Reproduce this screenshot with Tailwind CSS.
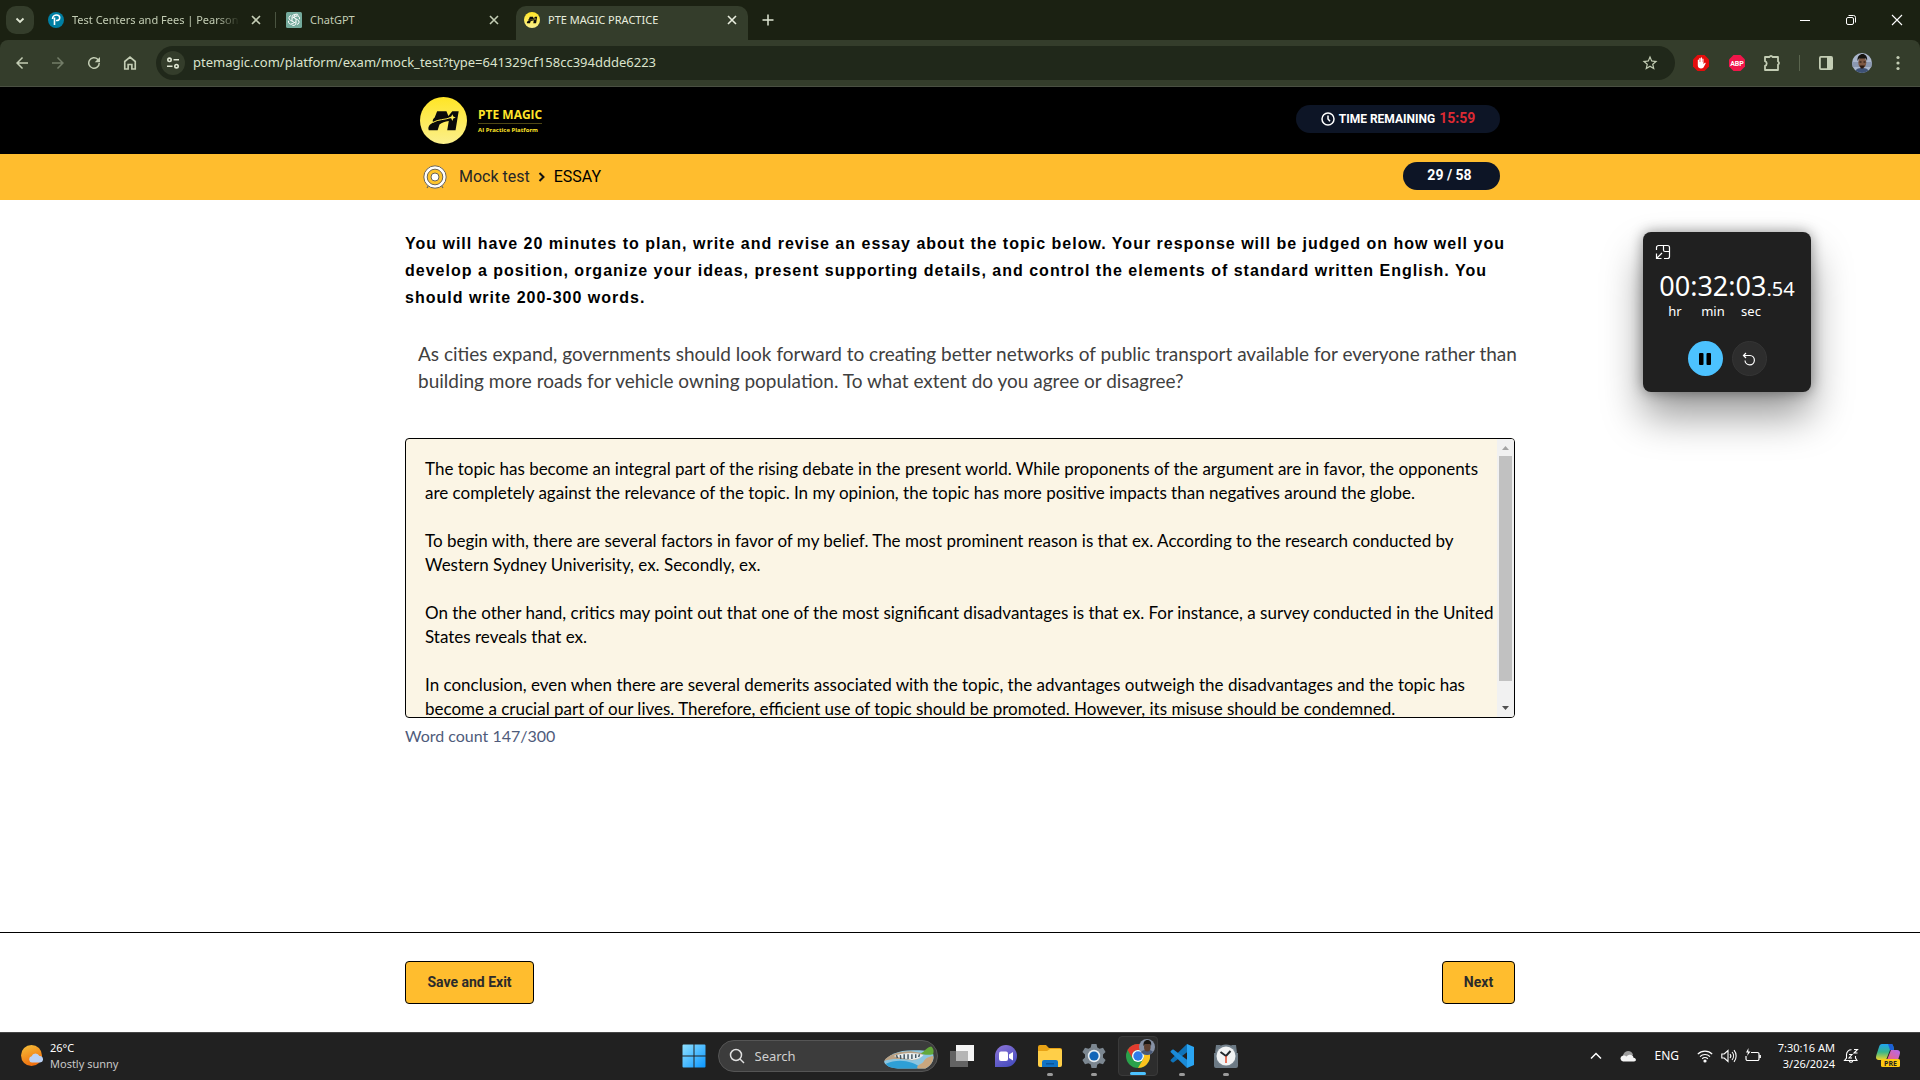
<!DOCTYPE html>
<html lang="en">
<head>
<meta charset="utf-8">
<meta name="viewport" content="width=device-width, initial-scale=1">
<title>PTE MAGIC PRACTICE</title>
<script src="https://cdn.jsdelivr.net/npm/@tailwindcss/browser@4"></script>
</head>
<body class="flex min-h-screen flex-col bg-white font-['Noto_Sans',sans-serif]">

<!-- Shared symbols -->
<svg width="0" height="0" class="absolute" aria-hidden="true">
  <symbol id="close" viewBox="0 0 16 16"><path d="M4 4l8 8M12 4l-8 8" fill="none" stroke="currentColor" stroke-width="1.6"/></symbol>
  <symbol id="magic" viewBox="0 0 48 48">
    <defs><linearGradient id="mg" x1="0" y1="0" x2="0" y2="1"><stop offset="0" stop-color="#ffe525"/><stop offset="1" stop-color="#fbf08d"/></linearGradient></defs>
    <circle cx="24" cy="24" r="24" fill="url(#mg)"/>
    <path d="M17.500 14.500h9.500l2 5 4-5h6.500L36.300 34h-8.500l1.600-9.500c-4 .6-7 1.600-9.500 3.500L18 34H9c-1.500-3.500 1-6.500 5.500-8.500h-1.300c-.8-2 .8-3.500 1.800-4.500z" fill="#0a0a0a"/>
    <path d="M13 26c6-3.500 12-2.500 18.500-5" stroke="#fdeb50" stroke-width="1" fill="none"/>
    <path d="M33 17.500l1 2.500 2.500 1-2.500 1-1 2.500-1-2.500-2.500-1 2.500-1z" fill="#fdeb50"/>
  </symbol>
</svg>

<!-- Browser tab strip -->
<nav aria-label="Tabs" class="flex h-10 shrink-0 items-center bg-[#1b2112] text-[11px] text-[#c3cdb4]">
  <button aria-label="Search tabs" class="ml-1.5 flex size-7 items-center justify-center rounded-[10px] bg-[#343d2b]">
    <svg class="size-4" viewBox="0 0 16 16" fill="none" stroke="#dfe6d3" stroke-width="1.8"><path d="M4.500 6.500L8 10l3.500-3.500"/></svg>
  </button>
  <div class="flex h-full w-[241px] items-center pl-3.5">
    <svg class="size-4 shrink-0" viewBox="0 0 16 16"><circle cx="8" cy="8" r="8" fill="#007fa3"/><path d="M6.500 13V5.500M4.500 7c0-3 2.500-4 4-4 2 0 3.200 1.200 3.200 2.800C11.700 7.800 10 8.800 8 8.500" fill="none" stroke="#fff" stroke-width="1.6"/></svg>
    <a href="#" class="ml-2 w-[168px] whitespace-nowrap [mask-image:linear-gradient(to_right,black_86%,transparent)]">Test Centers and Fees | Pearson</a>
    <button aria-label="Close tab" class="ml-2"><svg class="size-4"><use href="#close"/></svg></button>
  </div>
  <span class="h-4 w-px bg-[#4a5440]"></span>
  <div class="flex h-full w-[240px] items-center pr-3.5 pl-2.5">
    <svg class="size-4 shrink-0" viewBox="0 0 16 16"><rect width="16" height="16" rx="1.500" fill="#74aa9c"/><path fill="none" stroke="#fff" d="M8 6V4.500a2.400 2.400 0 014.400-1.300M6 9.200V5a2.400 2.400 0 014.500-1.200M6.300 6.200l3.600-2a2.400 2.400 0 013.400 3.100M8 5.800l3.800 2.100a2.400 2.400 0 01-.9 4.500M10 6.900V11a2.400 2.400 0 01-4.500 1.200M9.800 9.800l-3.700 2a2.400 2.400 0 01-3.400-3.100M8 10.200L4.200 8.100a2.400 2.400 0 01.9-4.500"/></svg>
    <a href="#" class="ml-2 flex-1">ChatGPT</a>
    <button aria-label="Close tab"><svg class="size-4"><use href="#close"/></svg></button>
  </div>
  <div class="flex h-[34px] w-[232px] items-center self-end rounded-t-[10px] bg-[#343d2b] pr-2 pb-1.5 pl-2 text-[#e9eedf]">
    <svg class="size-4 shrink-0"><use href="#magic"/></svg>
    <a href="#" aria-current="page" class="ml-2 flex-1">PTE MAGIC PRACTICE</a>
    <button aria-label="Close tab"><svg class="size-4"><use href="#close"/></svg></button>
  </div>
  <button aria-label="New tab" class="ml-3"><svg class="size-4" viewBox="0 0 16 16" stroke="#dfe6d3" stroke-width="1.5"><path d="M8 2.500v11M2.500 8h11"/></svg></button>
  <div class="ml-auto flex text-white">
    <button aria-label="Minimize" class="flex w-[46px] justify-center"><svg class="size-3" viewBox="0 0 12 12" stroke="currentColor"><path d="M1 6.500h10"/></svg></button>
    <button aria-label="Restore" class="flex w-[46px] justify-center"><svg class="size-3" viewBox="0 0 12 12" fill="none" stroke="currentColor"><rect x="1.500" y="3.500" width="7" height="7" rx="1.500"/><path d="M3.500 1.500H8.500a2 2 0 012 2V8.500"/></svg></button>
    <button aria-label="Close" class="flex w-[46px] justify-center"><svg class="size-3" viewBox="0 0 12 12" stroke="currentColor" stroke-width="1.100"><path d="M1 1l10 10M11 1L1 11"/></svg></button>
  </div>
</nav>

<!-- Browser toolbar -->
<div class="shrink-0 bg-[#1b2112]">
<div class="flex h-[47px] items-center rounded-t-lg border-b border-[#4a5042] bg-[#343d2b] text-[#c3cdb4]">
  <div class="flex w-[156px] items-center gap-[18px] pl-[13px]">
    <button aria-label="Back"><svg class="size-[18px]" viewBox="0 0 24 24" fill="currentColor"><path d="M20 11H7.830l5.590-5.590L12 4l-8 8 8 8 1.410-1.410L7.830 13H20z"/></svg></button>
    <button aria-label="Forward" class="text-[#737d68]"><svg class="size-[18px]" viewBox="0 0 24 24" fill="currentColor"><path d="M4 11h12.170l-5.590-5.590L12 4l8 8-8 8-1.410-1.410L16.170 13H4z"/></svg></button>
    <button aria-label="Reload"><svg class="size-[18px]" viewBox="0 0 24 24" fill="currentColor"><path d="M17.650 6.350A8 8 0 1020 12h-2a6 6 0 11-1.780-4.220L13 11h7V4z"/></svg></button>
    <button aria-label="Home"><svg class="size-[18px]" viewBox="0 0 24 24" fill="none" stroke="currentColor" stroke-width="2.200"><path d="M5 10v10h4.500v-6h5v6H19V10l-7-6z"/></svg></button>
  </div>
  <div class="flex h-[34px] flex-1 items-center rounded-full bg-[#20281a] pr-4 pl-[5px]">
    <span class="flex size-6 items-center justify-center rounded-full bg-[#343d2b]">
      <svg class="size-4" viewBox="0 0 16 16" fill="none" stroke="#dfe6d3" stroke-width="1.600"><circle cx="4.500" cy="4.800" r="1.700"/><path d="M8.500 4.800H14M2 11.200h5.500"/><circle cx="11.500" cy="11.200" r="1.700"/></svg>
    </span>
    <input aria-label="Address" type="text" value="ptemagic.com/platform/exam/mock_test?type=641329cf158cc394ddde6223" class="ml-2 flex-1 bg-transparent text-[13px] text-[#dbe3cc] outline-none">
    <button aria-label="Bookmark"><svg class="size-[18px]" viewBox="0 0 24 24" fill="currentColor"><path d="M22 9.240l-7.190-.62L12 2 9.190 8.630 2 9.240l5.460 4.730L5.820 21 12 17.270 18.180 21l-1.630-7.030zM12 15.400l-3.760 2.270 1-4.280-3.320-2.880 4.380-.38L12 6.100l1.710 4.040 4.380.38-3.320 2.880 1 4.280z"/></svg></button>
  </div>
  <div class="flex items-center pr-3.5 pl-[17px]">
    <button aria-label="AdBlock"><svg class="size-[18px]" viewBox="0 0 18 18"><path d="M5.500 1h7L17 5.500v7L12.500 17h-7L1 12.500v-7z" fill="#e40d0d"/><path d="M5.800 9.500V6c0-.8 1.200-.8 1.200 0v2h.3V4.500c0-.8 1.200-.8 1.200 0V8h.3V4c0-.9 1.200-.9 1.200 0v4h.3V5c0-.8 1.200-.8 1.200 0v5.200l1-1.300c.7-.6 1.500 0 1 .8L11.500 13.500c-1.500 1.800-5.700 1.400-5.700-2z" fill="#fff"/></svg></button>
    <button aria-label="Adblock Plus" class="ml-[18px]"><svg class="size-[18px]" viewBox="0 0 18 18"><path d="M5.500 1h7L17 5.500v7L12.500 17h-7L1 12.500v-7z" fill="#f0164a"/><text x="9" y="11.500" text-anchor="middle" fill="#fff" font-family="Roboto, sans-serif" font-size="7" font-weight="700">ABP</text></svg></button>
    <button aria-label="Extensions" class="ml-4"><svg class="size-5" viewBox="0 0 20 20" fill="none" stroke="currentColor" stroke-width="1.800" stroke-linejoin="round"><path d="M3 4h4.500a1.600 1.600 0 013 0H16v4.500a1.600 1.600 0 010 3V17H3v-4.200a2.400 2.400 0 000-4.600z"/></svg></button>
    <span class="ml-[17px] h-4 w-px bg-[#5a654e]"></span>
    <button aria-label="Side panel" class="ml-[18px]"><svg class="size-4" viewBox="0 0 16 16"><rect x="1.900" y="1.900" width="12.200" height="12.200" rx="1" fill="none" stroke="currentColor" stroke-width="1.800"/><path d="M9 2h5v12H9z" fill="currentColor"/></svg></button>
    <button aria-label="Profile" class="ml-[18px]"><svg class="size-5" viewBox="0 0 20 20"><clipPath id="av"><circle cx="10" cy="10" r="10"/></clipPath><g clip-path="url(#av)"><path fill="#aab6cc" d="M0 0h20v20H0z"/><path fill="#8b98b0" d="M0 9h20v5H0z"/><path d="M3 20c0-4 3-5 7-5s7 1 7 5z" fill="#3e5275"/><ellipse cx="10.300" cy="9.500" rx="4" ry="5.500" fill="#7d5843"/><path d="M5.500 8C5 3 8 1 10.500 1S16 3.500 15 8l-1-2.500H7z" fill="#15120f"/><path d="M7.500 12.500h5.500L11 15.500H9z" fill="#2a1a12"/><path d="M7.500 9h2M11.500 9h2" stroke="#1c120c"/></g></svg></button>
    <button aria-label="Menu" class="ml-[18px]"><svg class="size-4" viewBox="0 0 16 16" fill="currentColor"><circle cx="8" cy="2.500" r="1.600"/><circle cx="8" cy="8" r="1.600"/><circle cx="8" cy="13.500" r="1.600"/></svg></button>
  </div>
</div>
</div>

<!-- Site header -->
<header class="shrink-0 bg-black">
  <div class="mx-auto flex h-[67px] max-w-[1080px] items-center justify-between">
    <a href="#" class="flex items-center gap-[11px]">
      <svg class="size-[47px]" aria-label="PTE Magic"><use href="#magic"/></svg>
      <span class="flex flex-col font-['Open_Sans',sans-serif] font-bold text-[#ffe52a]">
        <span class="border-b border-[#4e4715] pt-0.5 text-[12px] leading-4">PTE MAGIC</span>
        <span class="text-[6px] leading-3">AI Practice Platform</span>
      </span>
    </a>
    <div class="mb-1 flex h-7 w-[204px] items-center justify-center gap-1 rounded-full bg-[#0d1526] font-['Roboto',sans-serif] text-[12px] font-bold text-white">
      <svg class="size-3.5" viewBox="0 0 14 14" fill="none" stroke="currentColor" stroke-width="1.500"><circle cx="7" cy="7" r="6"/><path d="M7 3.500V7l2 2.300"/></svg>
      <span>TIME REMAINING</span><time class="text-[14px] text-[#dc2a33]">15:59</time>
    </div>
  </div>
</header>
<div class="shrink-0 bg-[#ffbd2e]">
  <div class="mx-auto flex h-[46px] max-w-[1080px] items-center justify-between">
    <nav aria-label="Breadcrumb" class="flex items-center pl-[3px] font-['Roboto',sans-serif] text-base text-[#262626]">
      <svg class="size-6" viewBox="0 0 24 24"><path d="M6 20l-2 3M18 20l2 3" stroke="#6b6455" stroke-width="1.200"/><circle cx="12" cy="12" r="11.200" fill="#fff" stroke="#6b6455" stroke-width="1"/><circle cx="12" cy="12" r="7.800" fill="#ffc52c" stroke="#6b6455" stroke-width="1"/><circle cx="12" cy="12" r="4" fill="#fff" stroke="#6b6455" stroke-width="1"/></svg>
      <a href="#" class="ml-3">Mock test</a>
      <svg class="mx-[7px] size-2.5" viewBox="0 0 10 10" fill="none" stroke="#111" stroke-width="2"><path d="M2.500 1l4 4-4 4"/></svg>
      <span class="text-black">ESSAY</span>
    </nav>
    <div class="mb-0.5 flex h-7 w-[97px] items-center justify-center rounded-full bg-[#0d1526] pr-1 pb-0.5 font-['Roboto',sans-serif] text-[14px] font-bold text-white">29 / 58</div>
  </div>
</div>

<!-- Essay task -->
<main class="mx-auto w-full max-w-[1140px] flex-1 px-[15px] pt-[30px] font-['Lato',sans-serif]">
  <h1 class="font-['Liberation_Sans',Arial,sans-serif] text-base leading-[27px] font-bold tracking-[1px] text-black">You will have 20 minutes to plan, write and revise an essay about the topic below. Your response will be judged on how well you develop a position, organize your ideas, present supporting details, and control the elements of standard written English. You should write 200-300 words.</h1>
  <p class="mt-[29px] -mr-1 pl-[13px] text-[19px] leading-[27px] text-[#404040]">As cities expand, governments should look forward to creating better networks of public transport available for everyone rather than<br>building more roads for vehicle owning population. To what extent do you agree or disagree?</p>
  <div class="mt-11 flex h-[280px] overflow-hidden rounded border border-black bg-[#fbf5e5]">
    <textarea aria-label="Your response" class="h-full flex-1 resize-none overflow-hidden pt-[18px] pl-[19px] text-[17px] leading-6 whitespace-pre text-black outline-none">The topic has become an integral part of the rising debate in the present world. While proponents of the argument are in favor, the opponents
are completely against the relevance of the topic. In my opinion, the topic has more positive impacts than negatives around the globe.

To begin with, there are several factors in favor of my belief. The most prominent reason is that ex. According to the research conducted by
Western Sydney Univerisity, ex. Secondly, ex.

On the other hand, critics may point out that one of the most significant disadvantages is that ex. For instance, a survey conducted in the United
States reveals that ex.

In conclusion, even when there are several demerits associated with the topic, the advantages outweigh the disadvantages and the topic has
become a crucial part of our lives. Therefore, efficient use of topic should be promoted. However, its misuse should be condemned.</textarea>
    <div aria-hidden="true" class="flex w-[17px] flex-col items-center bg-[#f1f1f1]">
      <svg class="h-[17px] w-[17px]" viewBox="0 0 17 17"><path d="M5 11l3.500-4 3.500 4z" fill="#a3a3a3"/></svg>
      <span class="h-[225px] w-[13px] bg-[#c1c1c1]"></span>
      <svg class="mt-auto h-[17px] w-[17px]" viewBox="0 0 17 17"><path d="M5 6l3.500 4L12 6z" fill="#505050"/></svg>
    </div>
  </div>
  <p class="mt-1.5 text-base text-[#4f5b7b]">Word count 147/300</p>
</main>
<footer class="shrink-0 border-t border-black">
  <div class="mx-auto flex max-w-[1140px] justify-between px-[15px] py-7 font-['Roboto',sans-serif] text-[14px] font-bold text-[#2b2b2b]">
    <button class="h-[43px] w-[129px] rounded border border-black bg-[#ffbd2e]">Save and Exit</button>
    <button class="h-[43px] w-[73px] rounded border border-black bg-[#ffbd2e]">Next</button>
  </div>
</footer>

<!-- Desktop taskbar -->
<div class="grid h-12 shrink-0 grid-cols-[1fr_auto_1fr] items-center border-t border-[#454545] bg-[#212121] pb-0.5 text-[11px] leading-4 text-white">
  <div class="flex items-center gap-[7px] pl-[21px]">
    <svg class="size-[22px]" viewBox="0 0 22 22"><defs><linearGradient id="sun" x1="0" y1="0" x2=".4" y2="1"><stop offset="0" stop-color="#f5c13a"/><stop offset="1" stop-color="#f0700f"/></linearGradient></defs><circle cx="10.500" cy="10.500" r="10.500" fill="url(#sun)"/><path d="M11 17.500a3.200 3.200 0 01-.4-6.300 4.200 4.200 0 017.800-.3 3.300 3.300 0 01.6 6.600z" fill="#bcd2f5"/></svg>
    <p>26°C<br><span class="text-[#c8c8c8]">Mostly sunny</span></p>
  </div>
  <div class="flex h-full items-center pr-0.5">
    <button aria-label="Start" class="mr-3 ml-[11px]"><svg class="size-6" viewBox="0 0 24 24"><defs><linearGradient id="win" x1="0" y1="0" x2="1" y2="1"><stop offset="0" stop-color="#8fe0ff"/><stop offset="1" stop-color="#0a96ff"/></linearGradient></defs><path d="M.5 1.500a1 1 0 011-1h10v11H.5zM12.500.5h10a1 1 0 011 1v10h-11zM.5 12.500h11v11h-10a1 1 0 01-1-1zM12.500 12.500h11v10a1 1 0 01-1 1h-10z" fill="url(#win)"/></svg></button>
    <div class="flex h-8 w-[220px] items-center overflow-hidden rounded-full border border-[#555] bg-[#3c3c3c] pl-2.5">
      <svg class="size-4" viewBox="0 0 16 16" fill="none" stroke="#e0e0e0" stroke-width="1.500"><circle cx="7" cy="7" r="5.500"/><path d="M11 11l4 4"/></svg>
      <input aria-label="Search" type="text" placeholder="Search" class="ml-2.5 w-[129px] bg-transparent text-[13px] outline-none placeholder:text-[#cfcfcf]">
      <svg class="mt-1 h-[24px] w-[50px]" viewBox="0 0 52 24"><path d="M0 16C4 9 14 4 30 4c10 0 18 0 21 4 2 5-1 11-8 15H18C8 23 2 21 0 16z" fill="#8cc5e0"/><path d="M2 18c8-4 19-4 27-1s9 5 4 6H18C8 23 3 21 2 18z" fill="#2e9fd6"/><path d="M0 15C4 9 14 5 28 5l13 2c-3 6-8 8-14 7-8-1-18-2-27 1z" fill="#b9a184"/><path d="M10 10c10-4 24-4 31-1-3 4-8 5-12 5-6-1-12-2-19-4z" fill="#e8eef0"/><path d="M13 9l1 3M17 9l.5 4M21 8v5M25 8v5M29 8v5M33 8v4M37 8l-1 3" stroke="#43555f" stroke-width="1.500"/><path d="M35 23c-2-4 4-4 6-7 2-4 5-5 10-6 1 5-2 10-8 13z" fill="#c9a77e"/><path d="M38 7c4-1 6-6 11-7 3 2 3 6 2 8-4 1-9 1-13-1z" fill="#63a83a"/></svg>
    </div>
    <button aria-label="Task view" class="ml-[2px] flex h-10 w-11 items-center justify-center"><svg class="size-6" viewBox="0 0 24 24"><path fill="#636363" d="M0 7h18v16H0z"/><path fill="#f4f4f4" d="M6 1h18v16H6z"/><path fill="#b5b5b5" d="M6 7h12v10H6z"/></svg></button>
    <button aria-label="Chat" class="flex h-10 w-11 items-center justify-center"><svg class="size-6" viewBox="0 0 24 24"><defs><linearGradient id="ch" x1="0" y1="0" x2=".6" y2="1"><stop offset="0" stop-color="#8f76d8"/><stop offset="1" stop-color="#4a4fc0"/></linearGradient></defs><path d="M12 1a11 11 0 110 22H1V12A11 11 0 0112 1z" fill="url(#ch)"/><rect x="5" y="7.500" width="9" height="9.500" rx="2" fill="#fff"/><path d="M15 10.500l4-2.500v8.500L15 14z" fill="#fff"/></svg></button>
    <button aria-label="File Explorer" class="relative flex h-10 w-11 items-center justify-center"><svg class="size-6" viewBox="0 0 24 24"><path d="M0 3a2 2 0 012-2h6l3 3h11a2 2 0 012 2v4H0z" fill="#e8a215"/><path d="M0 7h9l3-2h10a2 2 0 012 2v14a2 2 0 01-2 2H2a2 2 0 01-2-2z" fill="#ffcf48"/><path d="M4 23v-5a2 2 0 012-2h12a2 2 0 012 2v5z" fill="#1273c4"/><path d="M8 19h8v1.500H8z" fill="#0a559c"/></svg><span class="absolute bottom-0 h-[3px] w-1.5 rounded-full bg-[#9a9a9a]"></span></button>
    <button aria-label="Settings" class="relative flex h-10 w-11 items-center justify-center"><svg class="size-6" viewBox="0 0 24 24"><path d="M9.500 0h5l.8 3.600 2.200 1.200L21 3.700l2.600 4.400L21 10.600v2.800l2.600 2.500-2.600 4.400-3.500-1.100-2.200 1.200-.8 3.600h-5l-.8-3.600-2.200-1.200L3 20.300.4 15.900 3 13.400v-2.800L.4 8.100 3 3.700l3.500 1.100 2.200-1.200z" fill="#7c8791"/><circle cx="12" cy="12" r="6.200" fill="#e7edf1"/><circle cx="12" cy="12" r="4.600" fill="#1165b8"/></svg><span class="absolute bottom-0 h-[3px] w-1.5 rounded-full bg-[#9a9a9a]"></span></button>
    <button aria-label="Google Chrome" class="relative mx-0.5 flex size-10 items-center justify-center rounded border border-[#3a3a3a] bg-[#2d2d2d]"><svg class="size-6" viewBox="0 0 24 24"><circle cx="12" cy="12" r="12" fill="#2aa14b"/><path d="M1.600 6A12 12 0 0122.400 6H12a6 6 0 00-5.200 9z" fill="#e33b2e"/><path d="M22.400 6A12 12 0 0112 24l5.200-9A6 6 0 0012 6z" fill="#fcc31e"/><circle cx="12" cy="12" r="6" fill="#fff"/><circle cx="12" cy="12" r="4.700" fill="#2f7de9"/></svg>
      <svg class="absolute top-0.5 right-0.5 size-4" viewBox="0 0 16 16"><circle cx="8" cy="8" r="8" fill="#8792a6"/><path d="M2 13c2-3 10-3 12 0-3 4-9 4-12 0z" fill="#4a5a78"/><ellipse cx="8.300" cy="8" rx="3.300" ry="4.500" fill="#5d4031"/><path d="M4.500 7C4 3 6 1 8.500 1S13 3 12 7l-1-2H6z" fill="#181512"/></svg>
      <span class="absolute bottom-0 h-[3px] w-4 rounded-full bg-[#4cc2ff]"></span></button>
    <button aria-label="Visual Studio Code" class="relative flex h-10 w-11 items-center justify-center"><svg class="size-6" viewBox="0 0 24 24"><path d="M17 0L1 15.500c-.6.600-.6 1.200 0 1.700l1.300 1.100c.5.400 1 .4 1.500 0L18 7.500z" fill="#0f73b9"/><path d="M17 24L1 8.500C.4 7.900.4 7.300 1 6.800l1.300-1.100c.5-.4 1-.4 1.500 0L18 16.500z" fill="#1b8bd8"/><path d="M17 0l7 3v18l-7 3z" fill="#2aa5f3"/></svg><span class="absolute bottom-0 h-[3px] w-1.5 rounded-full bg-[#9a9a9a]"></span></button>
    <button aria-label="Clock" class="relative flex h-10 w-11 items-center justify-center"><svg class="size-6" viewBox="0 0 24 24"><path d="M0 9h24v13a2 2 0 01-2 2H2a2 2 0 01-2-2zM2 1h5L1 9zM22 1h-5l6 8z" fill="#6c7a85"/><circle cx="12" cy="11.500" r="11" fill="#74828d"/><circle cx="12" cy="12" r="9.500" fill="#f1f3f4"/><path d="M6.500 8l5.500 4 4.500-5" stroke="#23292d" stroke-width="2" fill="none"/><path d="M12 12v7" stroke="#e0482c" stroke-width="1.500"/></svg><span class="absolute bottom-0 h-[3px] w-1.5 rounded-full bg-[#9a9a9a]"></span></button>
  </div>
  <div class="flex items-center justify-end pr-5">
    <button aria-label="Hidden icons"><svg class="size-4" viewBox="0 0 16 16" fill="none" stroke="#fff" stroke-width="1.500"><path d="M3 10.500l5-5 5 5"/></svg></button>
    <svg class="ml-4 size-4" viewBox="0 0 16 16"><path d="M3 8.500A5.200 5.200 0 018 3c2.500 0 4.500 1.500 5 4l-6 4z" fill="#9c9c9c"/><path d="M3 13.500a3 3 0 01-.5-5.800c2-.7 3 0 4 .8 2-2.500 6.500-2.300 7 1.200 3.300.5 3 3.800.5 3.800z" fill="#f4f4f4"/></svg>
    <span class="ml-[18px] text-[12px]">ENG</span>
    <svg class="ml-[18px] size-4" viewBox="0 0 16 16" fill="none" stroke="#fff" stroke-width="1.200"><path d="M.8 6.200a10.200 10.200 0 0114.400 0M3 8.600a7 7 0 0110 0M5.200 10.800a4 4 0 015.600 0"/><circle cx="8" cy="13" r="1" fill="#fff"/></svg>
    <svg class="ml-2 size-4" viewBox="0 0 16 16" fill="none" stroke="#fff" stroke-width="1.100"><path d="M.8 6h2.400L7 2.500v11L3.200 10H.8zM9 6a3 3 0 010 4M11 4a6 6 0 010 8M13 2.200a9 9 0 010 11.600"/></svg>
    <svg class="ml-2 size-4" viewBox="0 0 16 16" fill="none" stroke="#fff" stroke-width="1.200"><path d="M6 4.500h6.500a1.500 1.500 0 011.500 1.500v5a1.500 1.500 0 01-1.500 1.500h-10A1.500 1.500 0 011 11V8M15.300 7v3"/><path d="M3.500 0L1 4.500h2L2 8l3.500-4.500H3.300z" fill="#fff" stroke="none"/></svg>
    <p class="ml-2.5 w-16 text-right whitespace-nowrap">7:30:16 AM<br>3/26/2024</p>
    <svg class="ml-2 size-4" viewBox="0 0 16 16" fill="none" stroke="#fff" stroke-width="1.100"><path d="M8.500 1.800A4.700 4.700 0 003.500 6.500V10l-2 2.500h12.500L12.500 10V8M6.300 13a1.800 1.800 0 003.400 0M6 6.500h3L6 10h3M11 1.500h3.500L11 5h3.500"/></svg>
    <svg class="ml-[17px] h-[23px] w-6" viewBox="0 0 24 23"><defs><linearGradient id="cp" x1="0" y1="0" x2="0" y2="1"><stop offset="0" stop-color="#1fa4f0"/><stop offset=".5" stop-color="#37b58c"/><stop offset="1" stop-color="#f2d52a"/></linearGradient><linearGradient id="cq" x1="1" y1="0" x2="0" y2="1"><stop offset="0" stop-color="#b269f0"/><stop offset="1" stop-color="#f0627a"/></linearGradient></defs><path d="M6 0h9c2 0 2 1.500 2.500 3L18 6h-4L10 16H3c-3 0-3.500-2-2.600-5L3 3C3.500 1 4.500 0 6 0z" fill="url(#cp)"/><path d="M12 0h3c2 0 2 1.500 2.500 3L18 6h-4z" fill="#1c5fd6"/><path d="M15 6h6c3 0 3.500 2 2.600 5L22 16H11z" fill="url(#cq)"/><rect x="5" y="15" width="19" height="8" rx="1.500" fill="#ffc911"/><text x="14.500" y="21.500" text-anchor="middle" font-family="Open Sans, sans-serif" font-size="7" font-weight="700" fill="#222">PRE</text></svg>
  </div>
</div>

<!-- Floating stopwatch window -->
<section aria-label="Stopwatch" class="absolute top-[232px] right-[109px] flex h-40 w-[168px] flex-col rounded-lg bg-[#202020] text-white shadow-[0_24px_40px_rgba(0,0,0,0.4),0_0_14px_rgba(0,0,0,0.4)]">
  <button aria-label="Back to full view" class="mt-3 ml-3 size-4"><svg class="size-4" viewBox="0 0 16 16" fill="none" stroke="#fff" stroke-width="1.200"><path d="M1.500 6V3.500a2 2 0 012-2h9a2 2 0 012 2v9a2 2 0 01-2 2H9M8.500 1.500V6a1.500 1.500 0 001.500 1.500h4.500M7 9l-5 5M1.500 9.500v5h5"/></svg></button>
  <p class="mt-3 flex items-baseline justify-center text-[27px] leading-7"><span>00:32:03</span><span class="text-[20px]">.54</span></p>
  <p class="grid grid-cols-[38px_38px_38px] pl-[13px] text-center text-[13px] leading-4"><span>hr</span><span>min</span><span>sec</span></p>
  <div class="mt-[22px] flex justify-center gap-[9px]">
    <button aria-label="Pause" class="flex size-[35px] items-center justify-center rounded-full bg-[#4cc2ff]"><svg class="size-3" viewBox="0 0 12 12" fill="#000"><rect width="4.500" height="12" rx="1"/><rect x="7.500" width="4.500" height="12" rx="1"/></svg></button>
    <button aria-label="Reset" class="flex size-[35px] items-center justify-center rounded-full border border-[#353535] bg-[#2d2d2d]"><svg class="size-3.5" viewBox="0 0 14 14" fill="none" stroke="#fff" stroke-width="1.200"><path d="M4 1L1.500 3.500 4 6M1.500 3.500H8a4.700 4.700 0 11-5 5"/></svg></button>
  </div>
</section>
</body>
</html>
